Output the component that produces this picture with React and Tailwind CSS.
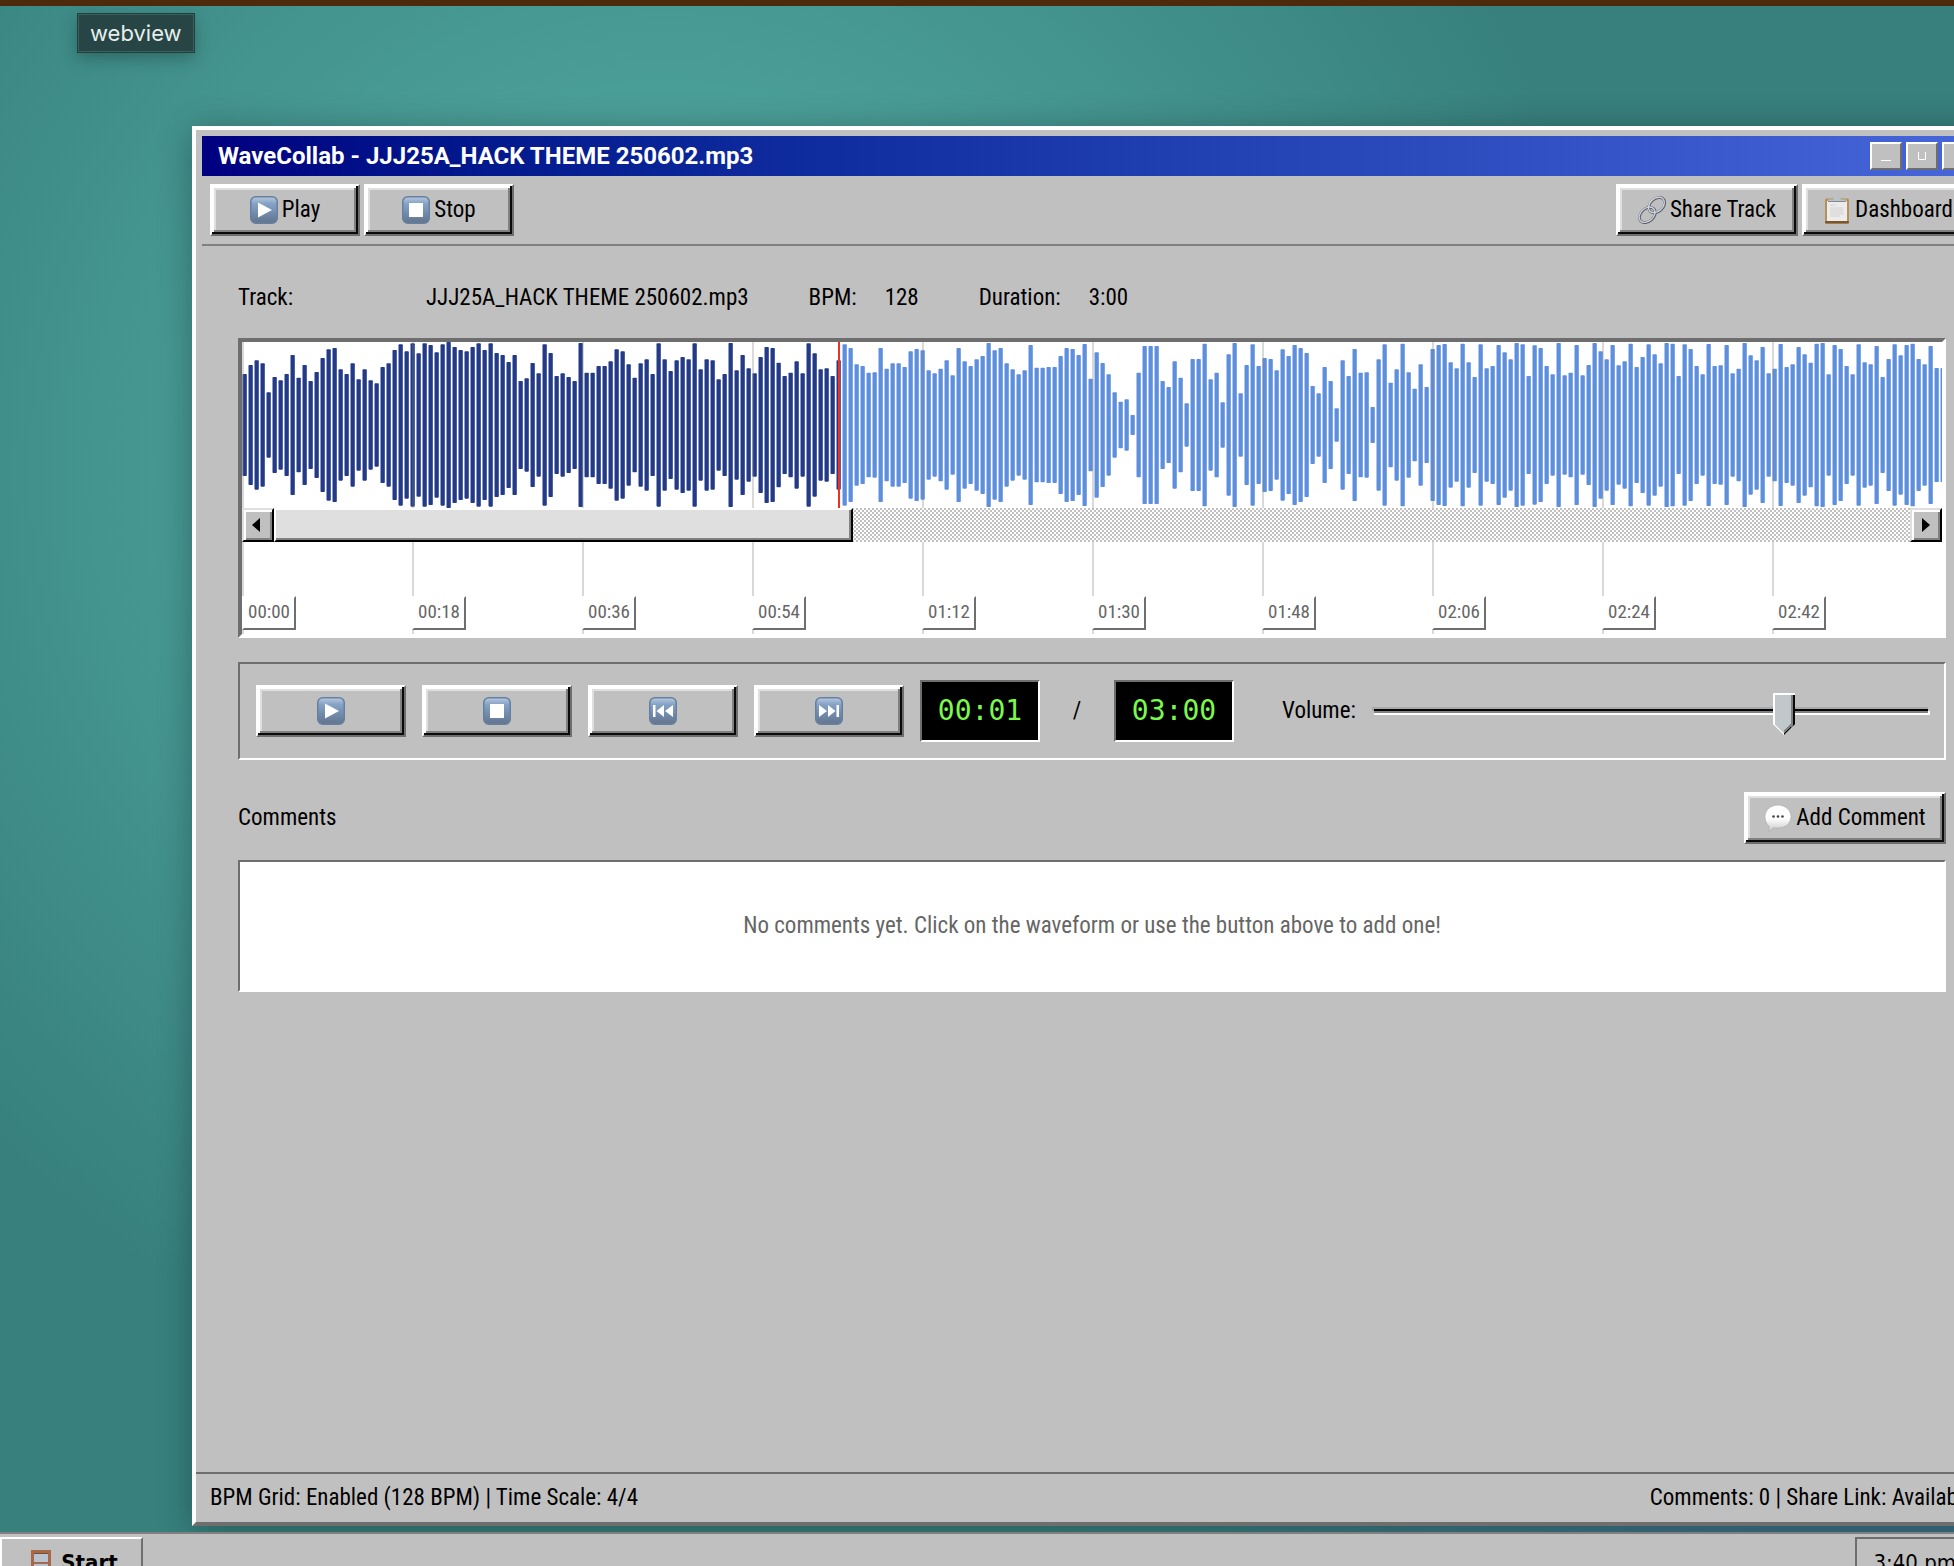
import { useState } from "react";

const PEAKS = [
  132, 105, 91, 100, 187, 141, 151, 132, 75, 143, 105, 153, 126, 84, 58, 54, 118, 132, 100, 148, 118, 151, 160, 111,
  100, 60, 43, 64, 40, 70, 40, 45, 67, 43, 36, 51, 60, 64, 51, 40, 60, 40, 69, 75, 96, 75, 153, 145, 99, 130, 43, 69,
  138, 130, 141, 153, 39, 128, 128, 108, 108, 94, 58, 64, 103, 143, 100, 88, 132, 40, 88, 123, 91, 81, 88, 40, 118, 88,
  91, 148, 132, 39, 121, 75, 115, 130, 81, 51, 54, 98, 138, 128, 94, 130, 40, 70, 118, 115, 138, 91, 43, 54, 103, 108,
  128, 127, 54, 116, 100, 100, 111, 64, 57, 61, 121, 130, 116, 91, 136, 54, 94, 108, 88, 78, 39, 61, 54, 100, 118, 133,
  121, 45, 113, 113, 111, 111, 78, 54, 57, 75, 42, 146, 67, 99, 133, 187, 215, 208, 255, 128, 48, 48, 48, 153, 171, 94,
  143, 220, 87, 87, 41, 148, 128, 217, 73, 39, 190, 105, 43, 108, 84, 87, 121, 58, 78, 45, 54, 69, 168, 190, 111, 153,
  235, 91, 138, 57, 128, 127, 231, 88, 43, 158, 118, 41, 127, 176, 103, 171, 57, 45, 42, 97, 115, 41, 97, 141, 43, 115,
  108, 45, 67, 88, 39, 43, 138, 46, 54, 108, 133, 39, 136, 128, 45, 136, 105, 39, 64, 88, 45, 106, 94, 41, 111, 81, 43,
  73, 100, 39, 41, 138, 43, 57, 108, 133, 42, 108, 106, 45, 130, 116, 39, 76, 91, 51, 130, 116, 42, 111, 103, 51, 73,
  98, 41, 39, 133, 45, 57, 108, 133, 43, 97, 103, 48, 141, 87, 43, 76, 45, 41, 87, 103, 48, 114, 114,
];

const TICKS = ["00:00", "00:18", "00:36", "00:54", "01:12", "01:30", "01:48", "02:06", "02:24", "02:42"];

const RAISED =
  "flex items-center justify-center border-2 border-t-white border-l-white border-r-[#6e6e6e] border-b-[#6e6e6e] bg-[#c0c0c0] shadow-[inset_-2px_-2px_#0a0a0a,inset_2px_2px_#fff,inset_-4px_-4px_#808080,inset_4px_4px_#dfdfdf]";
const SUNKEN = "border-2 border-t-[#6e6e6e] border-l-[#6e6e6e] border-r-white border-b-white";
const SCROLL_BUTTON =
  "flex h-[34px] w-8 shrink-0 items-center justify-center border-2 border-t-[#dfdfdf] border-l-[#dfdfdf] border-r-black border-b-black bg-[#c0c0c0] shadow-[inset_2px_2px_#fff,inset_-2px_-2px_#808080]";

function Key({ children }) {
  return (
    <svg viewBox="0 0 28 28" className="size-7" aria-hidden="true">
      <defs>
        <linearGradient id="key" x1="0" y1="0" x2="0" y2="1">
          <stop offset="0" stopColor="#b9c9de" />
          <stop offset="0.25" stopColor="#86a3c6" />
          <stop offset="0.6" stopColor="#718cae" />
          <stop offset="1" stopColor="#64748c" />
        </linearGradient>
      </defs>
      <rect x="0.75" y="0.75" width="26.5" height="26.5" rx="5" fill="url(#key)" stroke="#66809f" strokeWidth="1.5" />
      <g fill="#fff">{children}</g>
    </svg>
  );
}

const PlayIcon = () => (
  <Key>
    <path d="M8 6.5L22 14L8 21.5Z" />
  </Key>
);
const StopIcon = () => (
  <Key>
    <path d="M7 7H21V21H7Z" />
  </Key>
);
const PrevIcon = () => (
  <Key>
    <path d="M4 8H6.5V20H4ZM15 8V20L7.5 14ZM24 8V20L16 14Z" />
  </Key>
);
const NextIcon = () => (
  <Key>
    <path d="M21.5 8H24V20H21.5ZM13 8V20L20.5 14ZM4 8V20L12 14Z" />
  </Key>
);

const LinkIcon = () => (
  <svg viewBox="0 0 28 28" className="size-7" fill="none" aria-hidden="true">
    <g stroke="#5f6269" strokeWidth="2.8">
      <ellipse cx="18.800" cy="9.200" rx="9" ry="6.400" transform="rotate(-42 18.800 9.200)" />
      <ellipse cx="9.400" cy="19" rx="9" ry="6.400" transform="rotate(-42 9.400 19)" />
    </g>
    <g stroke="#cdd4df" strokeWidth="1.4">
      <ellipse cx="18.400" cy="8.900" rx="9" ry="6.400" transform="rotate(-42 18.400 8.900)" />
      <ellipse cx="9" cy="18.700" rx="9" ry="6.400" transform="rotate(-42 9 18.700)" />
    </g>
  </svg>
);

const ClipboardIcon = () => (
  <svg viewBox="0 0 28 28" className="size-7" aria-hidden="true">
    <rect x="2" y="2.5" width="24" height="25" rx="1.5" fill="#b5905a" />
    <rect x="2" y="25" width="24" height="2.5" rx="1" fill="#7d5527" />
    <path d="M4 5H24V25H4Z" fill="#ececec" />
    <path d="M7 9H13M7 12H20M7 14H21M7 16H20M7 18H21M7 20H17" stroke="#d2d2d2" strokeWidth="1.2" />
    <path d="M5 6V3.5H10Q11 1 14 1Q17 1 18 3.5H23V6Z" fill="#b9c3cc" />
    <path d="M5 5.5H23" stroke="#86888a" />
  </svg>
);

const BubbleIcon = () => (
  <svg viewBox="0 0 28 28" className="size-7" aria-hidden="true">
    <defs>
      <linearGradient id="bubble" x1="0" y1="0" x2="0" y2="1">
        <stop offset="0.5" stopColor="#fff" />
        <stop offset="1" stopColor="#c9c9c9" />
      </linearGradient>
    </defs>
    <path
      d="M14 1C21 1 27 6 27 12.500C27 19.500 21.500 24 14 24C12 24 10.500 24 9 23.500C8 25.500 6 27 4 27.500C5 26 5.500 24 5 22C2.500 20 1 17 1 12.500C1 6 7 1 14 1Z"
      fill="url(#bubble)"
      stroke="#b4b4b4"
      strokeWidth="0.8"
    />
    <g fill="#444">
      <circle cx="9.500" cy="12.500" r="1.300" />
      <circle cx="14" cy="12.500" r="1.300" />
      <circle cx="18.500" cy="12.500" r="1.300" />
    </g>
  </svg>
);

const WindowIcon = () => (
  <svg viewBox="0 0 20 26" className="h-[26px] w-5" aria-hidden="true">
    <rect x="1.500" y="1.500" width="17" height="23" fill="#b9c3d0" stroke="#a5694a" strokeWidth="3" />
    <path d="M1 13H19" stroke="#a5694a" strokeWidth="2" />
    <path d="M3 3.500H17" stroke="#7b4a33" />
  </svg>
);

function BevelButton({ className = "", children, ...rest }) {
  return (
    <button type="button" className={`${RAISED} h-[52px] min-w-[150px] gap-1 ${className}`} {...rest}>
      {children}
    </button>
  );
}

function CaptionButton({ label, path }) {
  return (
    <button
      type="button"
      aria-label={label}
      className="flex h-7 w-8 items-center justify-center border-2 border-t-white border-l-white border-r-[#6e6e6e] border-b-[#6e6e6e] bg-[#c0c0c0]"
    >
      <svg viewBox="0 0 16 16" className="size-4" fill="none" stroke="#fff" aria-hidden="true">
        <path d={path} />
      </svg>
    </button>
  );
}

function Waveform() {
  return (
    <svg viewBox="0 0 1700 166" preserveAspectRatio="none" className="block h-[166px] w-full" aria-hidden="true">
      {PEAKS.map((top, i) => {
        const half = (285 - top) / 3;
        return (
          <rect
            key={i}
            x={i * 6 + 0.5}
            y={83 - half}
            width="4.300"
            height={half * 2}
            rx="0.800"
            fill={i < 100 ? "#233a87" : "#5d8fdd"}
          />
        );
      })}
      {TICKS.map((tick, i) => (
        <rect key={tick} x={i * 170} y="0" width="2" height="166" fill="#808080" fillOpacity="0.300" />
      ))}
      <rect x="596" y="0" width="2" height="166" fill="#ee3124" />
    </svg>
  );
}

function Field({ label, value, wide }) {
  return (
    <div className="flex gap-7">
      <dt className={wide ? "w-40" : ""}>{label}</dt>
      <dd>{value}</dd>
    </div>
  );
}

export default function App() {
  const [volume, setVolume] = useState(75);
  return (
    <div className="flex h-screen flex-col overflow-hidden bg-[#37807d] bg-[radial-gradient(circle_at_1900px_1250px,rgba(66,92,150,0.600)_0,rgba(66,92,150,0)_900px),radial-gradient(circle_at_666px_470px,#57b2aa_0,#37807d_950px)] font-['Roboto_Condensed','Liberation_Sans',sans-serif] text-[23px] leading-8 text-black">
      <div className="h-1.5 shrink-0 bg-[#4e2a0c]" />
      <div className="flex h-30 shrink-0 items-start pt-[7px] pl-[77px]">
        <span className="border border-[#1f3f3e] bg-[#264544] px-3 py-[3px] font-['Inter','Roboto',sans-serif] text-[22px] text-[#e6efee] shadow-[inset_0_0_0_1px_#3f5f5e,0_6px_16px_rgba(0,0,0,0.250)]">
          webview
        </span>
      </div>

      <main className="-mr-[38px] mb-1.5 ml-48 flex min-h-0 flex-1 flex-col border-4 border-t-white border-l-white border-r-[#6e6e6e] border-b-[#6e6e6e] bg-[#c0c0c0] shadow-[0_4px_32px_rgba(0,0,0,0.300)]">
        <header className="mx-1.5 mt-1.5 flex h-10 items-center justify-between bg-linear-to-r from-[#000080] to-[#4666da] pr-2 pl-4">
          <h1 className="font-['Roboto','Liberation_Sans',sans-serif] text-[24px] font-bold text-white">
            WaveCollab - JJJ25A_HACK THEME 250602.mp3
          </h1>
          <div className="flex gap-1">
            <CaptionButton label="Minimize" path="M3 12.500H13" />
            <CaptionButton label="Maximize" path="M4.500 4V11.500H11.500V4" />
            <CaptionButton label="Close" path="M4 4L12 12M12 4L4 12" />
          </div>
        </header>

        <div className="mx-1.5 flex justify-between border-b-2 border-[#808080] p-2">
          <div className="flex gap-1">
            <BevelButton>
              <PlayIcon />
              Play
            </BevelButton>
            <BevelButton>
              <StopIcon />
              Stop
            </BevelButton>
          </div>
          <div className="flex gap-1">
            <BevelButton className="min-w-[182px]">
              <LinkIcon />
              Share Track
            </BevelButton>
            <BevelButton className="min-w-[172px]">
              <ClipboardIcon />
              Dashboard
            </BevelButton>
          </div>
        </div>

        <section className="flex min-h-0 flex-1 flex-col px-[42px] pt-9">
          <dl className="mb-6 flex gap-15">
            <Field label="Track:" value="JJJ25A_HACK THEME 250602.mp3" wide />
            <Field label="BPM:" value="128" />
            <Field label="Duration:" value="3:00" />
          </dl>

          <div className="border-4 border-t-[#6e6e6e] border-l-[#6e6e6e] border-r-white border-b-white bg-white">
            <Waveform />
            <div className="flex bg-[repeating-conic-gradient(#c0c0c0_0_25%,#fff_0_50%)] bg-[length:4px_4px]">
              <button type="button" aria-label="Scroll left" className={SCROLL_BUTTON}>
                <svg viewBox="0 0 8 14" className="mr-1 h-3.5 w-2" aria-hidden="true">
                  <path d="M8 0V14L0 7Z" />
                </svg>
              </button>
              <div className="flex-1">
                <div className="h-[34px] w-[35.400%] border-2 border-t-white border-l-white border-r-black border-b-black bg-[#dfdfdf] shadow-[inset_-2px_-2px_#808080]" />
              </div>
              <button type="button" aria-label="Scroll right" className={SCROLL_BUTTON}>
                <svg viewBox="0 0 8 14" className="h-3.5 w-2" aria-hidden="true">
                  <path d="M0 0V14L8 7Z" />
                </svg>
              </button>
            </div>
            <ol className="flex h-[92px] text-[19px] leading-7 text-[#666]">
              {TICKS.map((tick) => (
                <li key={tick} className="flex flex-1 items-end border-l-2 border-[#d9d9d9] pb-1">
                  <span className="-ml-0.5 border-2 border-t-white border-l-white border-r-[#6e6e6e] border-b-[#6e6e6e] bg-white pr-1 pb-0.5 pl-1">
                    {tick}
                  </span>
                </li>
              ))}
            </ol>
          </div>

          <div className={`${SUNKEN} mt-6 flex items-center gap-4 p-4`}>
            <BevelButton aria-label="Play">
              <PlayIcon />
            </BevelButton>
            <BevelButton aria-label="Stop">
              <StopIcon />
            </BevelButton>
            <BevelButton aria-label="Previous">
              <PrevIcon />
            </BevelButton>
            <BevelButton aria-label="Next">
              <NextIcon />
            </BevelButton>
            <time className={`${SUNKEN} flex h-[62px] w-30 items-center justify-center bg-black font-['DejaVu_Sans_Mono',monospace] text-[28px] text-[#7bfa4c]`}>
              00:01
            </time>
            <span className="w-[42px] text-center">/</span>
            <time className={`${SUNKEN} flex h-[62px] w-30 items-center justify-center bg-black font-['DejaVu_Sans_Mono',monospace] text-[28px] text-[#7bfa4c]`}>
              03:00
            </time>
            <label htmlFor="volume" className="ml-8 w-[76px]">
              Volume:
            </label>
            <input
              id="volume"
              type="range"
              value={volume}
              onChange={(e) => setVolume(Number(e.target.value))}
              className="h-[42px] min-w-0 flex-1 appearance-none bg-transparent [&::-webkit-slider-runnable-track]:h-1 [&::-webkit-slider-runnable-track]:bg-[linear-gradient(#000_50%,#808080_50%)] [&::-webkit-slider-runnable-track]:shadow-[2px_2px_#fff,0_2px_#fff,-2px_-2px_#a9a9a9,0_-2px_#a9a9a9] [&::-webkit-slider-thumb]:-mt-4 [&::-webkit-slider-thumb]:h-[42px] [&::-webkit-slider-thumb]:w-[22px] [&::-webkit-slider-thumb]:appearance-none [&::-webkit-slider-thumb]:bg-[linear-gradient(45deg,#fff_0_9px,transparent_9px),linear-gradient(-45deg,#0a0a0a_0_9px,#808080_9px_11px,transparent_11px),linear-gradient(#c0c8cb,#c0c8cb)] [&::-webkit-slider-thumb]:bg-[length:11px_11px,11px_11px,100%_100%] [&::-webkit-slider-thumb]:bg-[position:left_bottom,right_bottom,center] [&::-webkit-slider-thumb]:bg-no-repeat [&::-webkit-slider-thumb]:shadow-[inset_2px_2px_#fff,inset_-2px_0_#0a0a0a,inset_-4px_0_#808080] [&::-webkit-slider-thumb]:[clip-path:polygon(0_0,100%_0,100%_31px,50%_100%,0_31px)]"
            />
          </div>

          <div className="mt-8 mb-4 flex items-center justify-between">
            <h2>Comments</h2>
            <BevelButton className="min-w-[202px]">
              <BubbleIcon />
              Add Comment
            </BevelButton>
          </div>
          <div className={`${SUNKEN} bg-white py-12 text-center text-[#666]`}>
            No comments yet. Click on the waveform or use the button above to add one!
          </div>
        </section>

        <footer className="flex justify-between border-t-2 border-[#6e6e6e] px-3.5 py-2">
          <span>BPM Grid: Enabled (128 BPM) | Time Scale: 4/4</span>
          <span>Comments: 0 | Share Link: Available</span>
        </footer>
      </main>

      <nav className="-mb-[30px] flex h-16 shrink-0 items-start justify-between border-t-2 border-[#808080] bg-[#c0c0c0] pt-[3px] font-['DejaVu_Sans_Condensed',sans-serif] text-[22px]">
        <button
          type="button"
          className="flex h-[52px] w-[143px] items-center justify-center gap-2.5 border-2 border-t-white border-l-white border-r-[#6e6e6e] border-b-[#6e6e6e] pl-1.5 font-bold"
        >
          <WindowIcon />
          Start
        </button>
        <div className={`${SUNKEN} -mr-5 flex h-[52px] items-center px-4`}>3:40 pm</div>
      </nav>
    </div>
  );
}
